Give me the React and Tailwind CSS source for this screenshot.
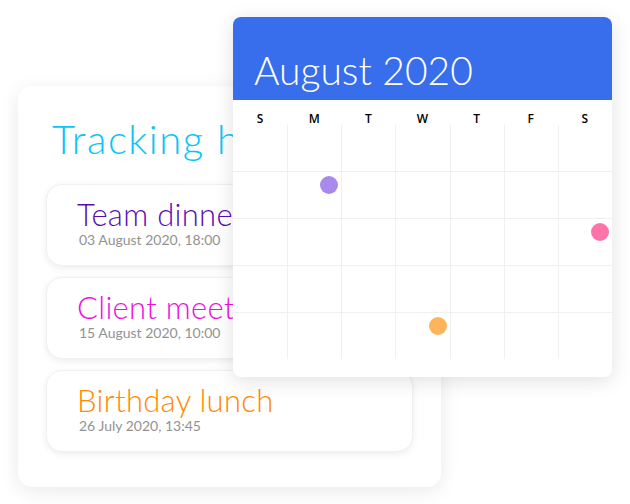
const events = [
  { title: 'Team dinner', date: '03 August 2020, 18:00', color: 'text-[#5a0cb4]' },
  { title: 'Client meeting', date: '15 August 2020, 10:00', color: 'text-[#ee10dc]' },
  { title: 'Birthday lunch', date: '26 July 2020, 13:45', color: 'text-[#ff8a00]' },
];

const days = ['S', 'M', 'T', 'W', 'T', 'F', 'S'];

// dots keyed by "row-col"
const dots = {
  '1-1': 'bg-[#a889ee]',
  '2-6': 'bg-[#ff73ac]',
  '4-3': 'bg-[#ffb45c]',
};

function EventCard({ item }) {
  return (
    <div className="h-[82px] rounded-[16px] bg-white border border-[#f1f1f1] shadow-[0_2px_7px_rgba(0,0,0,0.08)] pl-[30px] pt-[13px]">
      <div className={`text-[31px] leading-[32px] font-light tracking-[0.3px] ${item.color}`}>{item.title}</div>
      <div className="mt-[2px] pl-[2px] text-[14px] leading-[16px] text-[#929292]">{item.date}</div>
    </div>
  );
}

function Calendar() {
  return (
    <div className="absolute left-[233px] top-[17px] w-[379px] h-[360px] rounded-[8px] bg-white overflow-hidden shadow-[0_4px_20px_rgba(0,0,0,0.12)]">
      <div className="h-[83px] bg-[#386deb] flex items-end pl-[21px] pb-[10px]">
        <span className="text-white text-[39px] leading-[40px] font-light">August 2020</span>
      </div>
      <div className="grid grid-cols-7 h-[25px]">
        {days.map((d, i) => (
          <div key={i} className="text-center pt-[13px] text-[12px] leading-[12px] font-semibold text-black font-['Open_Sans',sans-serif]">
            {d}
          </div>
        ))}
      </div>
      <div className="grid grid-cols-7 grid-rows-[46px_47px_47px_47px_47px]">
        {Array.from({ length: 5 }).map((_, r) =>
          days.map((_, c) => (
            <div
              key={`${r}-${c}`}
              className={`flex justify-end items-start pt-[4px] pr-[3px] border-[#f0f0f0] ${c > 0 ? 'border-l' : ''} ${r > 0 ? 'border-t' : ''}`}
            >
              {dots[`${r}-${c}`] && <div className={`w-[18px] h-[18px] rounded-full ${dots[`${r}-${c}`]}`} />}
            </div>
          ))
        )}
      </div>
    </div>
  );
}

export default function App() {
  return (
    <div className="relative w-[630px] h-[504px] bg-white overflow-hidden font-['Lato',sans-serif]">
      <div className="ml-[18px] mt-[86px] w-[423px] h-[401px] rounded-[14px] bg-white shadow-[0_4px_20px_rgba(0,0,0,0.09)] pt-[34px] px-[28px]">
        <h1 className="pl-[6px] text-[40px] leading-[39px] font-light tracking-[1.5px] text-[#0cc5f5]">Tracking hours</h1>
        <div className="mt-[25px] flex flex-col gap-[11px]">
          {events.map((e) => (
            <EventCard key={e.title} item={e} />
          ))}
        </div>
      </div>
      <Calendar />
    </div>
  );
}
